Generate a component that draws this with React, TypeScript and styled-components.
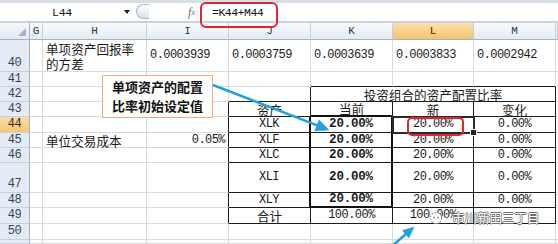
import React from 'react';
import styled, { createGlobalStyle } from 'styled-components';

const GlobalStyle = createGlobalStyle`
  html, body {
    margin: 0;
    padding: 0;
    background: #fff;
  }
  body {
    font-family: "Liberation Mono", "Noto Sans CJK SC", monospace;
  }
`;

type Line = 'grid' | 'thin' | 'thick';

interface Spec {
  text?: string;
  r?: Line;
  b?: Line;
  align?: 'left' | 'center' | 'right';
  v?: 'center' | 'end';
  bold?: boolean;
  han?: boolean;
  span?: number;
  selected?: boolean;
}

interface RowSpec {
  id: string;
  label: string;
  active?: boolean;
  tall?: boolean;
  cells: Spec[];
}

const lineCss = (l: Line) =>
  l === 'thick' ? '2px solid #111' : l === 'thin' ? '1px solid #1c1c1c' : '1px solid #d9dadc';

// G..M plus the 2px sliver of N at the right edge
const COLUMNS = ['G', 'H', 'I', 'J', 'K', 'L', 'M', ''];

const Page = styled.div`
  position: relative;
  width: 558px;
  height: 244px;
  overflow: hidden;
  background: #fff;
`;

const FormulaBar = styled.div`
  display: flex;
  height: 23px;
  box-sizing: border-box;
  border-top: 3px solid #d6dee8;
  border-bottom: 2px solid #c8d2de;
  background: #fff;
`;

const NameBox = styled.div`
  width: 136px;
  display: flex;
  align-items: center;
  font-size: 11.5px;
  letter-spacing: -0.3px;
  color: #151515;
`;

const NameText = styled.span`
  flex: 1;
  text-align: center;
`;

const DropArrow = styled.span`
  width: 0;
  height: 0;
  margin-right: 6px;
  border-left: 3px solid transparent;
  border-right: 3px solid transparent;
  border-top: 4px solid #1d1d1d;
`;

const Splitter = styled.span`
  width: 13px;
  height: 15px;
  margin-top: 1px;
  box-sizing: border-box;
  border: 1px solid #aab6c4;
  border-right: none;
  border-radius: 8px 0 0 8px;
  background: linear-gradient(#ffffff, #dbe2ea);
`;

const FxBox = styled.div`
  width: 51px;
  display: flex;
  align-items: center;
  justify-content: flex-end;
  padding-right: 5px;
  box-sizing: border-box;
  font: italic 12px "Liberation Serif", serif;
  color: #6c6c6c;

  sub {
    font-size: 8px;
    vertical-align: -1px;
  }
`;

const FormulaInput = styled.div`
  flex: 1;
  display: flex;
  align-items: center;
  padding-left: 12px;
  font-size: 11.5px;
  letter-spacing: -0.5px;
  color: #111;
`;

const Sheet = styled.div`
  display: grid;
  grid-template-columns: 30px 13px 104px 82px 82px 82px 81px 82px 2px;
  grid-template-rows: 17px 32px 15px 15px 15px 16px 15px 15px 30px 15px 16px 16px 4px;
`;

const Corner = styled.div`
  position: relative;
  box-sizing: border-box;
  border-right: 1px solid #9fb3cb;
  border-bottom: 1px solid #9fb3cb;
  background: linear-gradient(#f4f7fb, #e2e9f2);

  &::after {
    content: '';
    position: absolute;
    right: 3px;
    bottom: 3px;
    border-left: 8px solid transparent;
    border-bottom: 8px solid #a9b5c3;
  }
`;

const ColHead = styled.div<{ $active?: boolean }>`
  box-sizing: border-box;
  display: flex;
  align-items: center;
  justify-content: center;
  border-right: 1px solid #c6d0dc;
  border-bottom: 1px solid #9fb3cb;
  background: ${(p) =>
    p.$active ? 'linear-gradient(#fae0ad, #f4c36b)' : 'linear-gradient(#f8fafc, #e6ebf2)'};
  font-size: 11px;
  color: ${(p) => (p.$active ? '#3b2a0c' : '#2a3747')};
`;

const RowHead = styled.div<{ $active?: boolean; $tall?: boolean }>`
  box-sizing: border-box;
  display: flex;
  justify-content: center;
  align-items: ${(p) => (p.$tall ? 'flex-end' : 'center')};
  border-right: 1px solid #9fb3cb;
  border-bottom: 1px solid #c5d1df;
  background: ${(p) => (p.$active ? 'linear-gradient(#fadca4, #f5c679)' : '#e4ebf5')};
  font-size: 12px;
  line-height: 15px;
  letter-spacing: -0.5px;
  color: ${(p) => (p.$active ? '#3b2a0c' : '#2f4461')};
`;

const Cell = styled.div<{
  $r: Line;
  $b: Line;
  $align: 'left' | 'center' | 'right';
  $v: 'center' | 'end';
  $bold?: boolean;
  $han?: boolean;
  $span: number;
  $selected?: boolean;
}>`
  position: relative;
  box-sizing: border-box;
  display: flex;
  grid-column: span ${(p) => p.$span};
  align-items: ${(p) => (p.$v === 'end' ? 'flex-end' : 'center')};
  justify-content: ${(p) =>
    p.$align === 'right' ? 'flex-end' : p.$align === 'center' ? 'center' : 'flex-start'};
  padding: 0 3px;
  border-right: ${(p) => lineCss(p.$r)};
  border-bottom: ${(p) => lineCss(p.$b)};
  white-space: pre;
  line-height: 15px;
  color: #1a1a1a;
  font-family: ${(p) =>
    p.$han ? '"Noto Sans CJK SC", sans-serif' : '"Liberation Mono", "Noto Sans CJK SC", monospace'};
  font-size: ${(p) => (p.$han ? '12.6px' : p.$bold ? '12.5px' : '12px')};
  font-weight: ${(p) => (p.$bold ? 700 : 400)};
  letter-spacing: ${(p) => (p.$han ? '0' : p.$bold ? '-0.2px' : '-0.55px')};

  ${(p) =>
    p.$selected &&
    `
    z-index: 2;
    outline: 2px solid #2a2a2a;
    outline-offset: -1px;

    &::after {
      content: '';
      position: absolute;
      right: -4px;
      bottom: -4px;
      width: 5px;
      height: 5px;
      background: #222;
      border: 1px solid #fff;
    }
  `}
`;

const Callout = styled.div`
  position: absolute;
  left: 102px;
  top: 75px;
  width: 111px;
  height: 43px;
  box-sizing: border-box;
  padding-top: 1px;
  border: 1.5px solid #f1ab7d;
  background: #fff;
  text-align: center;
  font: 700 13px/19px "Noto Sans CJK SC", sans-serif;
  color: #111;
  z-index: 3;
`;

const RedMark = styled.div<{ $radius: number }>`
  position: absolute;
  box-sizing: border-box;
  border: 2px solid #e2252d;
  border-radius: ${(p) => p.$radius}px;
  pointer-events: none;
  z-index: 4;
`;

const ArrowLayer = styled.svg`
  position: absolute;
  left: 0;
  top: 0;
  width: 558px;
  height: 244px;
  pointer-events: none;
  z-index: 5;
`;

const Watermark = styled.div`
  position: absolute;
  left: 429px;
  top: 210px;
  display: flex;
  align-items: center;
  gap: 9px;
  pointer-events: none;
  z-index: 6;
`;

const WatermarkText = styled.span`
  font: 12.5px/16px "Noto Sans CJK SC", sans-serif;
  color: #ffffff;
  text-shadow: 0.7px 0 0 #707070, -0.7px 0 0 #707070, 0 0.7px 0 #707070, 0 -0.7px 0 #707070;
`;

const E: Spec = {};
const edge: Spec = { r: 'thin' };

const assetRow = (label: string, name: string, tall = false, last = false, active = false, selected = false): RowSpec => ({
  id: label,
  label,
  active,
  tall,
  cells: [
    E,
    E,
    edge,
    { text: name, align: 'center', r: 'thick', b: 'thin' },
    { text: '20.00%', bold: true, align: 'center', r: 'thick', b: last ? 'thick' : 'thin' },
    { text: '20.00%', align: 'center', r: 'thin', b: 'thin', selected },
    { text: '0.00%', align: 'center', r: 'thin', b: 'thin' },
    E,
  ],
});

const ROWS: RowSpec[] = [
  {
    id: '40',
    label: '40',
    tall: true,
    cells: [
      E,
      { text: '单项资产回报率\n的方差', han: true, v: 'end' },
      { text: '0.0003939' },
      { text: '0.0003759' },
      { text: '0.0003639' },
      { text: '0.0003833' },
      { text: '0.0002942' },
      E,
    ],
  },
  { id: '41', label: '41', cells: [E, E, E, E, { b: 'thin' }, { b: 'thin' }, { b: 'thin' }, E] },
  {
    id: '42',
    label: '42',
    cells: [
      E,
      E,
      E,
      { r: 'thin', b: 'thin' },
      { text: '投资组合的资产配置比率', han: true, align: 'center', span: 3, r: 'thin', b: 'thin' },
      E,
    ],
  },
  {
    id: '43',
    label: '43',
    cells: [
      E,
      E,
      edge,
      { text: '资产', han: true, align: 'center', r: 'thin', b: 'thin' },
      { text: '当前', han: true, align: 'center', r: 'thin', b: 'thick' },
      { text: '新', han: true, align: 'center', r: 'thin', b: 'thin' },
      { text: '变化', han: true, align: 'center', r: 'thin', b: 'thin' },
      E,
    ],
  },
  assetRow('44', 'XLK', false, false, true, true),
  (() => {
    const row = assetRow('45', 'XLF');
    row.cells[1] = { text: '单位交易成本', han: true };
    row.cells[2] = { text: '0.05%', align: 'right', r: 'thin' };
    return row;
  })(),
  assetRow('46', 'XLC'),
  assetRow('47', 'XLI', true),
  assetRow('48', 'XLY', false, true),
  {
    id: '49',
    label: '49',
    cells: [
      E,
      E,
      edge,
      { text: '合计', han: true, align: 'center', r: 'thin', b: 'thin' },
      { text: '100.00%', align: 'center', r: 'thin', b: 'thin' },
      { text: '100.00%', align: 'center', r: 'thin', b: 'thin' },
      { r: 'thin', b: 'thin' },
      E,
    ],
  },
  { id: '50', label: '50', cells: [E, E, E, E, E, E, E, E] },
  // only the top edge of row 51 is in view
  { id: '51', label: '', cells: [E, E, E, E, E, E, E, E] },
];

const Arrow = ({ x1, y1, x2, y2, head, half }: { x1: number; y1: number; x2: number; y2: number; head: number; half: number }) => {
  const len = Math.hypot(x2 - x1, y2 - y1);
  const dx = (x2 - x1) / len;
  const dy = (y2 - y1) / len;
  const bx = x2 - dx * head;
  const by = y2 - dy * head;
  const px = -dy * half;
  const py = dx * half;
  return (
    <g fill="#22a2dc" stroke="#22a2dc">
      <line x1={x1} y1={y1} x2={bx + dx} y2={by + dy} strokeWidth={2.6} />
      <polygon points={`${x2},${y2} ${bx + px},${by + py} ${bx - px},${by - py}`} strokeWidth={0.5} />
    </g>
  );
};

export default function App() {
  return (
    <Page>
      <GlobalStyle />
      <FormulaBar>
        <NameBox>
          <NameText>L44</NameText>
          <DropArrow />
        </NameBox>
        <Splitter />
        <FxBox>
          f<sub>x</sub>
        </FxBox>
        <FormulaInput>=K44+M44</FormulaInput>
      </FormulaBar>

      <Sheet>
        <Corner />
        {COLUMNS.map((c, i) => (
          <ColHead key={i} $active={c === 'L'}>
            {c}
          </ColHead>
        ))}
        {ROWS.map((row) => (
          <React.Fragment key={row.id}>
            <RowHead $active={row.active} $tall={row.tall}>
              {row.label}
            </RowHead>
            {row.cells.map((c, i) => (
              <Cell
                key={i}
                $r={c.r ?? 'grid'}
                $b={c.b ?? 'grid'}
                $align={c.align ?? 'left'}
                $v={c.v ?? 'center'}
                $bold={c.bold}
                $han={c.han}
                $span={c.span ?? 1}
                $selected={c.selected}
              >
                {c.text}
              </Cell>
            ))}
          </React.Fragment>
        ))}
      </Sheet>

      <Callout>
        单项资产的配置
        <br />
        比率初始设定值
      </Callout>

      <RedMark $radius={6} style={{ left: 200, top: 2, width: 78, height: 26 }} />
      <RedMark $radius={5} style={{ left: 407, top: 117, width: 57, height: 19 }} />

      <ArrowLayer viewBox="0 0 558 244">
        <Arrow x1={213} y1={85} x2={329} y2={130} head={13} half={6} />
        <Arrow x1={391} y1={247} x2={414} y2={227} head={11} half={5} />
      </ArrowLayer>

      <Watermark>
        <svg width="14" height="14" viewBox="0 0 14 14">
          <circle cx="7" cy="7" r="5.6" fill="#fff" stroke="#8a8a8a" strokeWidth="1.1" strokeDasharray="1.6 1.4" />
          <circle cx="5" cy="6.5" r="0.9" fill="#8a8a8a" />
          <circle cx="9" cy="6.5" r="0.9" fill="#8a8a8a" />
        </svg>
        <WatermarkText>市川新田三丁目</WatermarkText>
      </Watermark>
    </Page>
  );
}
